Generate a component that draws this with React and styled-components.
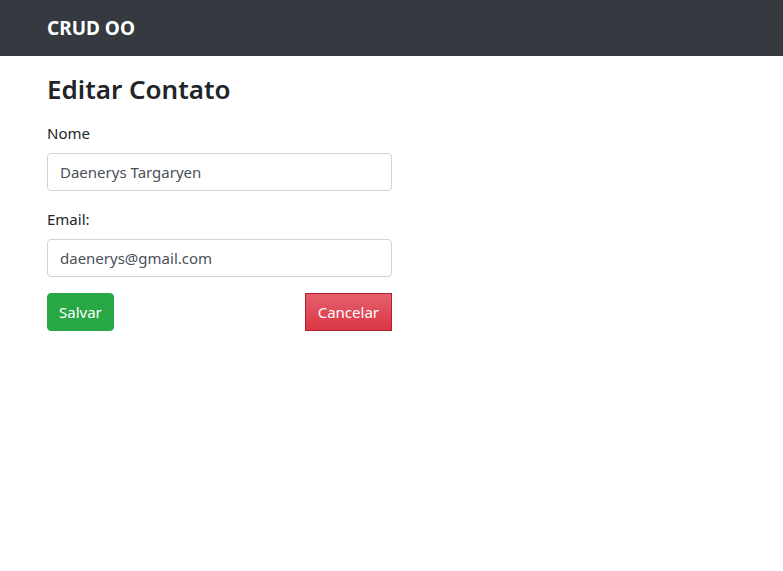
import React from 'react';
import styled, { createGlobalStyle } from 'styled-components';

const GlobalStyle = createGlobalStyle`
  body {
    margin: 0;
    font-family: "Noto Sans", "Open Sans", sans-serif;
    font-size: 15px;
    line-height: 24px;
    color: #212529;
    background: #fff;
  }
  * { box-sizing: border-box; }
`;

const Navbar = styled.nav`
  height: 56px;
  background-color: #343a40;
  display: flex;
  align-items: center;
  padding: 0 47px;
`;

const Brand = styled.div`
  color: #fff;
  font-size: 19px;
  font-weight: 700;
`;

const Container = styled.main`
  padding: 0 47px;
`;

const Title = styled.h3`
  font-size: 26px;
  font-weight: 600;
  line-height: 1.2;
  margin: 18px 0 16px;
`;

const Form = styled.form`
  width: 345px;
`;

const Group = styled.div`
  margin-bottom: 16px;
`;

const Label = styled.label`
  display: block;
  margin-bottom: 8px;
`;

const Input = styled.input`
  display: block;
  width: 100%;
  height: 38px;
  padding: 6px 12px;
  font: inherit;
  color: #495057;
  border: 1px solid #ced4da;
  border-radius: 4px;
  outline: none;
`;

const Actions = styled.div`
  display: flex;
  justify-content: space-between;
`;

const Button = styled.button`
  height: 38px;
  padding: 6px ${p => (p.$danger ? '12px' : '11px')};
  font: inherit;
  color: #fff;
  border-radius: ${p => (p.$danger ? '0' : '4px')};
  border: 1px solid ${p => (p.$danger ? '#b21f2d' : '#28a745')};
  background: ${p => (p.$danger ? 'linear-gradient(#e4606d, #dc3545)' : '#28a745')};
  cursor: pointer;
`;

export default function App() {
  return (
    <>
      <GlobalStyle />
      <Navbar>
        <Brand>CRUD OO</Brand>
      </Navbar>
      <Container>
        <Title>Editar Contato</Title>
        <Form>
          <Group>
            <Label>Nome</Label>
            <Input defaultValue="Daenerys Targaryen" />
          </Group>
          <Group>
            <Label>Email:</Label>
            <Input defaultValue="daenerys@gmail.com" />
          </Group>
          <Actions>
            <Button type="button">Salvar</Button>
            <Button type="button" $danger>Cancelar</Button>
          </Actions>
        </Form>
      </Container>
    </>
  );
}
